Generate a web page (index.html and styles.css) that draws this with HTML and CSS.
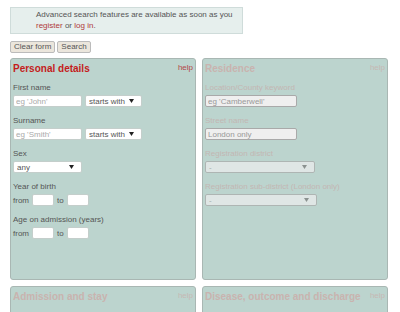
FILE: index.html
```html
<!DOCTYPE html>
<html lang="en">
  <head>
    <meta charset="UTF-8" />
    <title>Search</title>
    <link rel="stylesheet" href="styles.css">
  </head>
  <body>
    <div class="notice">
      Advanced search features are available as soon as you<br />
      <a href="#">register</a> or <a href="#">log in</a>.
    </div>

    <div class="actions">
      <button type="button">Clear form</button>
      <button type="button">Search</button>
    </div>

    <div class="panels">
      <div class="panel">
        <div class="panel-head">
          <h2>Personal details</h2>
          <a class="help" href="#">help</a>
        </div>
        <div class="field">
          <label>First name</label>
          <div class="row">
            <input type="text" class="name" placeholder="eg 'John'" />
            <select class="match"><option>starts with</option></select>
          </div>
        </div>
        <div class="field">
          <label>Surname</label>
          <div class="row">
            <input type="text" class="name" placeholder="eg 'Smith'" />
            <select class="match"><option>starts with</option></select>
          </div>
        </div>
        <div class="field">
          <label>Sex</label>
          <div class="row">
            <select class="sex"><option>any</option></select>
          </div>
        </div>
        <div class="field">
          <label>Year of birth</label>
          <div class="row">
            from <input type="text" class="num" /> to <input type="text" class="num" />
          </div>
        </div>
        <div class="field">
          <label>Age on admission (years)</label>
          <div class="row">
            from <input type="text" class="num" /> to <input type="text" class="num" />
          </div>
        </div>
      </div>

      <div class="panel disabled">
        <div class="panel-head">
          <h2>Residence</h2>
          <a class="help" href="#">help</a>
        </div>
        <div class="field">
          <label>Location/County keyword</label>
          <div class="row">
            <input type="text" class="wide" placeholder="eg 'Camberwell'" disabled />
          </div>
        </div>
        <div class="field">
          <label>Street name</label>
          <div class="row">
            <input type="text" class="wide" placeholder="London only" disabled />
          </div>
        </div>
        <div class="field">
          <label>Registration district</label>
          <div class="row">
            <select class="district" disabled><option>-</option></select>
          </div>
        </div>
        <div class="field">
          <label>Registration sub-district (London only)</label>
          <div class="row">
            <select class="district sub" disabled><option>-</option></select>
          </div>
        </div>
      </div>

      <div class="panel disabled">
        <div class="panel-head">
          <h2>Admission and stay</h2>
          <a class="help" href="#">help</a>
        </div>
      </div>

      <div class="panel disabled">
        <div class="panel-head">
          <h2>Disease, outcome and discharge</h2>
          <a class="help" href="#">help</a>
        </div>
      </div>
    </div>
  </body>
</html>
```

FILE: styles.css
```css
body {
  margin: 0;
  padding: 7px 0 0 10px;
  background: #fff;
  font-family: "Liberation Sans", Arial, sans-serif;
  font-size: 8px;
  color: #555;
}
a {
  color: #b03a3a;
  text-decoration: none;
}
.notice {
  width: 206px;
  padding: 1px 0 2px 25px;
  line-height: 11px;
  background: #e6efed;
  border: 1px solid #cfdcda;
  color: #555;
}
.actions {
  margin-top: 7px;
  display: flex;
  gap: 2px;
}
.actions button {
  font-family: inherit;
  font-size: 8px;
  color: #555;
  background: #ebe6dc;
  border: 1px solid #bbb;
  border-radius: 2px;
  height: 12px;
  padding: 0 3px;
  line-height: 10px;
}
.panels {
  margin-top: 5px;
  display: grid;
  grid-template-columns: 186px 186px;
  grid-template-rows: 222px 40px;
  gap: 6px;
}
.panel {
  background: #bcd4ce;
  border: 1px solid #a9b7b3;
  border-radius: 3px;
  padding: 3px 2px 0 2px;
  box-sizing: border-box;
}
.panel-head {
  display: flex;
  justify-content: space-between;
  align-items: flex-start;
  margin-bottom: 8px;
}
.panel-head h2 {
  margin: 0;
  font-size: 10px;
  font-weight: bold;
  color: #c41c1c;
  line-height: 13px;
}
.help {
  font-size: 8px;
  line-height: 11px;
  color: #b44848;
}
.field {
  margin-bottom: 9px;
}
.field label {
  display: block;
  height: 10px;
  line-height: 10px;
  margin-bottom: 2px;
}
.row {
  display: flex;
  align-items: center;
  gap: 3px;
  height: 12px;
}
input,
select {
  font-family: inherit;
  font-size: 8px;
  height: 12px;
  box-sizing: border-box;
  border: 1px solid #c4cecb;
  border-radius: 2px;
  background: #fff;
  color: #555;
  padding: 0 2px;
  margin: 0;
}
select {
  appearance: none;
  -webkit-appearance: none;
  padding: 0 10px 0 3px;
  background-image: url("data:image/svg+xml,%3Csvg xmlns='http://www.w3.org/2000/svg' width='5' height='4'%3E%3Cpath d='M0 0h5L2.5 4z' fill='%23222'/%3E%3C/svg%3E");
  background-repeat: no-repeat;
  background-position: right 7px center;
}
input::placeholder {
  color: #aaa;
}
.name {
  width: 69px;
}
.match {
  width: 57px;
}
.sex {
  width: 69px;
}
.num {
  width: 22px;
}
.disabled h2 {
  color: #c9b3af;
}
.disabled .help {
  color: #c6b8b4;
}
.disabled label {
  color: #c3b6b3;
}
.disabled input,
.disabled select {
  background-color: #efefef;
  border-color: #a9a9a9;
  color: #999;
}
.disabled select {
  background-image: url("data:image/svg+xml,%3Csvg xmlns='http://www.w3.org/2000/svg' width='5' height='4'%3E%3Cpath d='M0 0h5L2.5 4z' fill='%23777'/%3E%3C/svg%3E");
}
.disabled input::placeholder {
  color: #999;
}
.wide {
  width: 92px;
}
.district {
  width: 110px;
}
.district.sub {
  width: 112px;
}
```
